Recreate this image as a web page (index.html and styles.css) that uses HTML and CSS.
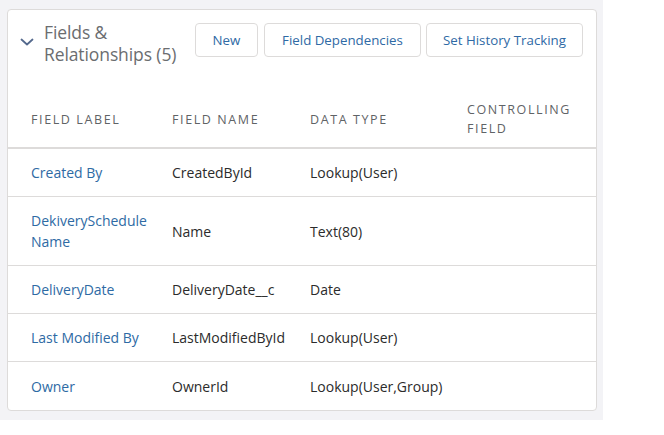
FILE: index.html
```html
<!DOCTYPE html>
<html>
<head>
<meta charset="utf-8">
<link rel="stylesheet" href="styles.css">
</head>
<body>
<div class="stage">
  <div class="card">
    <div class="card-header">
      <svg class="chevron" width="14" height="8" viewBox="0 0 14 8"><path d="M1.5 1.5 L7 6.5 L12.5 1.5" fill="none" stroke="#54698d" stroke-width="1.8" stroke-linecap="round" stroke-linejoin="round"/></svg>
      <h2 class="title">Fields &amp; Relationships (5)</h2>
      <div class="actions">
        <button class="btn btn-new">New</button>
        <button class="btn btn-dep">Field Dependencies</button>
        <button class="btn btn-hist">Set History Tracking</button>
      </div>
    </div>
    <div class="table">
      <div class="row head">
        <div class="cell">Field Label</div>
        <div class="cell">Field Name</div>
        <div class="cell">Data Type</div>
        <div class="cell last">Controlling Field</div>
      </div>
      <div class="row">
        <div class="cell link">Created By</div>
        <div class="cell">CreatedById</div>
        <div class="cell">Lookup(User)</div>
        <div class="cell last"></div>
      </div>
      <div class="row tall">
        <div class="cell link">DekiverySchedule Name</div>
        <div class="cell">Name</div>
        <div class="cell">Text(80)</div>
        <div class="cell last"></div>
      </div>
      <div class="row">
        <div class="cell link">DeliveryDate</div>
        <div class="cell">DeliveryDate__c</div>
        <div class="cell">Date</div>
        <div class="cell last"></div>
      </div>
      <div class="row">
        <div class="cell link">Last Modified By</div>
        <div class="cell">LastModifiedById</div>
        <div class="cell">Lookup(User)</div>
        <div class="cell last"></div>
      </div>
      <div class="row final">
        <div class="cell link">Owner</div>
        <div class="cell">OwnerId</div>
        <div class="cell">Lookup(User,Group)</div>
        <div class="cell last"></div>
      </div>
    </div>
  </div>
</div>
</body>
</html>
```

FILE: styles.css
```css
* { box-sizing: border-box; }
html, body { margin: 0; padding: 0; background: #ffffff; }
body { font-family: "Open Sans", "Noto Sans", sans-serif; color: #16325c; }

.stage {
  width: 603px;
  height: 420px;
  background: #f3f3f6;
  padding: 9px 6px 0 7px;
}

.card {
  background: #ffffff;
  border: 1px solid #dddbda;
  border-radius: 4px;
  width: 590px;
  height: 402px;
  overflow: hidden;
}

.card-header {
  display: flex;
  align-items: flex-start;
  padding: 13px 13px 0 12px;
  height: 81px;
}

.chevron {
  margin-top: 15px;
  flex: none;
}

.title {
  margin: -2px 0 0 10px;
  flex: 1;
  font-size: 17.5px;
  font-weight: 400;
  line-height: 22px;
  color: #6b6d70;
  letter-spacing: -0.1px;
}

.actions {
  display: flex;
  gap: 5px;
  flex: none;
}

.btn {
  height: 34px;
  border: 1px solid #dddbda;
  background: #ffffff;
  border-radius: 4px;
  padding: 0;
  font-family: inherit;
  font-size: 13.3px;
  color: #2f6aa5;
  text-align: center;
}
.btn-new { width: 63px; margin-right: 1px; }
.btn-dep { width: 157px; }
.btn-hist { width: 157px; }

.table { display: flex; flex-direction: column; }

.row {
  display: grid;
  grid-template-columns: 141px 138px 157px 1fr;
  padding-left: 23px;
  align-items: center;
  height: 48px;
  border-bottom: 1px solid #dddbda;
  font-size: 14px;
  color: #2b2b2b;
}
.row.head {
  height: 58px;
  border-bottom: 2px solid #dddbda;
  font-size: 12.5px;
  text-transform: uppercase;
  letter-spacing: 1.6px;
  color: #5f6366;
  line-height: 19px;
}
.row.tall { height: 69px; }
.row.final { border-bottom: none; }

.cell { padding-right: 8px; line-height: 21px; }
.head .cell { line-height: 19px; }
.cell.last { padding-right: 12px; }
.link { color: #2e6aa4; }
```
